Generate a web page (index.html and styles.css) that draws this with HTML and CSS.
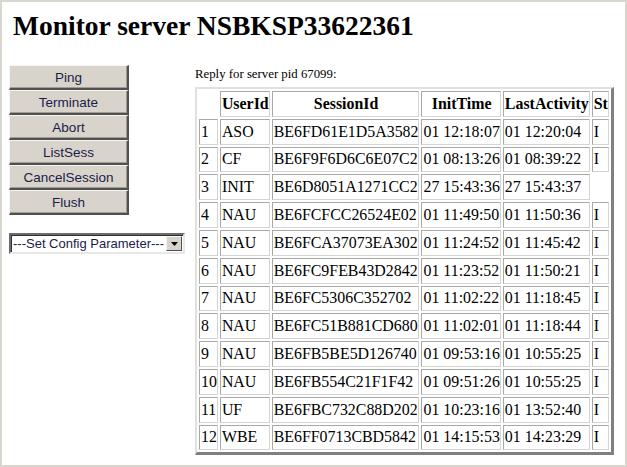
FILE: index.html
```html
<!DOCTYPE html>
<html>
<head>
<meta charset="utf-8">
<title>Monitor server NSBKSP33622361</title>
<link rel="stylesheet" href="styles.css">
</head>
<body>
<div class="frame">
  <h1 class="title">Monitor server NSBKSP33622361</h1>
  <div class="main">
    <div class="side">
      <div class="buttons">
        <button class="btn">Ping</button>
        <button class="btn">Terminate</button>
        <button class="btn">Abort</button>
        <button class="btn">ListSess</button>
        <button class="btn">CancelSession</button>
        <button class="btn">Flush</button>
      </div>
      <div class="select">
        <span class="select-text">---Set Config Parameter---</span>
        <span class="select-arrow"><svg width="7" height="4" viewBox="0 0 7 4"><path d="M0 0H7L3.5 4Z" fill="#000"/></svg></span>
      </div>
    </div>
    <div class="content">
      <div class="reply">Reply for server pid 67099:</div>
      <table class="sessions">
        <tr><td></td><th>UserId</th><th>SessionId</th><th>InitTime</th><th>LastActivity</th><th>St</th></tr>
        <tr><td>1</td><td>ASO</td><td>BE6FD61E1D5A3582</td><td>01 12:18:07</td><td>01 12:20:04</td><td>I</td></tr>
        <tr><td>2</td><td>CF</td><td>BE6F9F6D6C6E07C2</td><td>01 08:13:26</td><td>01 08:39:22</td><td>I</td></tr>
        <tr><td>3</td><td>INIT</td><td>BE6D8051A1271CC2</td><td>27 15:43:36</td><td>27 15:43:37</td><td></td></tr>
        <tr><td>4</td><td>NAU</td><td>BE6FCFCC26524E02</td><td>01 11:49:50</td><td>01 11:50:36</td><td>I</td></tr>
        <tr><td>5</td><td>NAU</td><td>BE6FCA37073EA302</td><td>01 11:24:52</td><td>01 11:45:42</td><td>I</td></tr>
        <tr><td>6</td><td>NAU</td><td>BE6FC9FEB43D2842</td><td>01 11:23:52</td><td>01 11:50:21</td><td>I</td></tr>
        <tr><td>7</td><td>NAU</td><td>BE6FC5306C352702</td><td>01 11:02:22</td><td>01 11:18:45</td><td>I</td></tr>
        <tr><td>8</td><td>NAU</td><td>BE6FC51B881CD680</td><td>01 11:02:01</td><td>01 11:18:44</td><td>I</td></tr>
        <tr><td>9</td><td>NAU</td><td>BE6FB5BE5D126740</td><td>01 09:53:16</td><td>01 10:55:25</td><td>I</td></tr>
        <tr><td>10</td><td>NAU</td><td>BE6FB554C21F1F42</td><td>01 09:51:26</td><td>01 10:55:25</td><td>I</td></tr>
        <tr><td>11</td><td>UF</td><td>BE6FBC732C88D202</td><td>01 10:23:16</td><td>01 13:52:40</td><td>I</td></tr>
        <tr><td>12</td><td>WBE</td><td>BE6FF0713CBD5842</td><td>01 14:15:53</td><td>01 14:23:29</td><td>I</td></tr>
      </table>
    </div>
  </div>
</div>
</body>
</html>
```

FILE: styles.css
```css
html, body {
  margin: 0;
  padding: 0;
  background: #ffffff;
}

.frame {
  box-sizing: border-box;
  width: 627px;
  height: 467px;
  border: 2px solid #d8d6cf;
  padding: 0 0 0 7px;
  font-family: "Liberation Serif", "Times New Roman", serif;
  color: #000;
  overflow: hidden;
}

.title {
  margin: 9px 0 0 4px;
  font-size: 27.5px;
  line-height: 30px;
  font-weight: bold;
}

.main {
  display: flex;
  gap: 10px;
  margin-top: 24px;
}

.side {
  width: 176px;
  display: flex;
  flex-direction: column;
  gap: 18px;
}

.buttons {
  display: flex;
  flex-direction: column;
  width: 120px;
}

.btn {
  box-sizing: border-box;
  height: 25px;
  width: 120px;
  margin: 0;
  padding: 0;
  background: #d8d4cc;
  border-style: solid;
  border-width: 1px 2px 2px 1px;
  border-color: #f6f5f2 #505050 #505050 #f6f5f2;
  box-shadow: inset -1px -1px 0 #a09c94;
  font-family: "Liberation Sans", Arial, sans-serif;
  font-size: 13.5px;
  color: #1c1c48;
  text-align: center;
}

.select {
  box-sizing: border-box;
  width: 176px;
  height: 21px;
  display: flex;
  align-items: center;
  justify-content: space-between;
  border-style: solid;
  border-width: 2px;
  border-color: #6c6c6c #e8e8e8 #e8e8e8 #6c6c6c;
  box-shadow: inset 1px 1px 0 #303030;
  background: #fff;
  padding: 0 1px 0 2px;
}

.select-text {
  font-family: "Liberation Sans", Arial, sans-serif;
  font-size: 13px;
  color: #1c1c48;
  white-space: nowrap;
}

.select-arrow {
  box-sizing: border-box;
  width: 16px;
  height: 15px;
  display: flex;
  align-items: center;
  justify-content: center;
  background: #d8d4cc;
  border-style: solid;
  border-width: 1px;
  border-color: #f6f5f2 #505050 #505050 #f6f5f2;
}

.content {
  display: flex;
  flex-direction: column;
}

.reply {
  font-size: 12.8px;
  line-height: 15px;
  margin-top: 2px;
  margin-bottom: 5px;
}

.sessions {
  border-collapse: separate;
  border-spacing: 2px;
  border-style: solid;
  border-width: 2px 3px 3px 2px;
  border-color: #e2e0da #808080 #808080 #e2e0da;
  empty-cells: hide;
  font-size: 15.9px;
  margin-left: 0;
}

.sessions td,
.sessions th {
  border: 1px solid;
  border-color: #a8a8a8 #d4d4d4 #d4d4d4 #a8a8a8;
  padding: 1px 0 1px 1px;
  height: 21.8px;
  line-height: 18px;
  white-space: nowrap;
  text-align: left;
  vertical-align: middle;
}

.sessions th {
  text-align: center;
  font-weight: bold;
}
```
